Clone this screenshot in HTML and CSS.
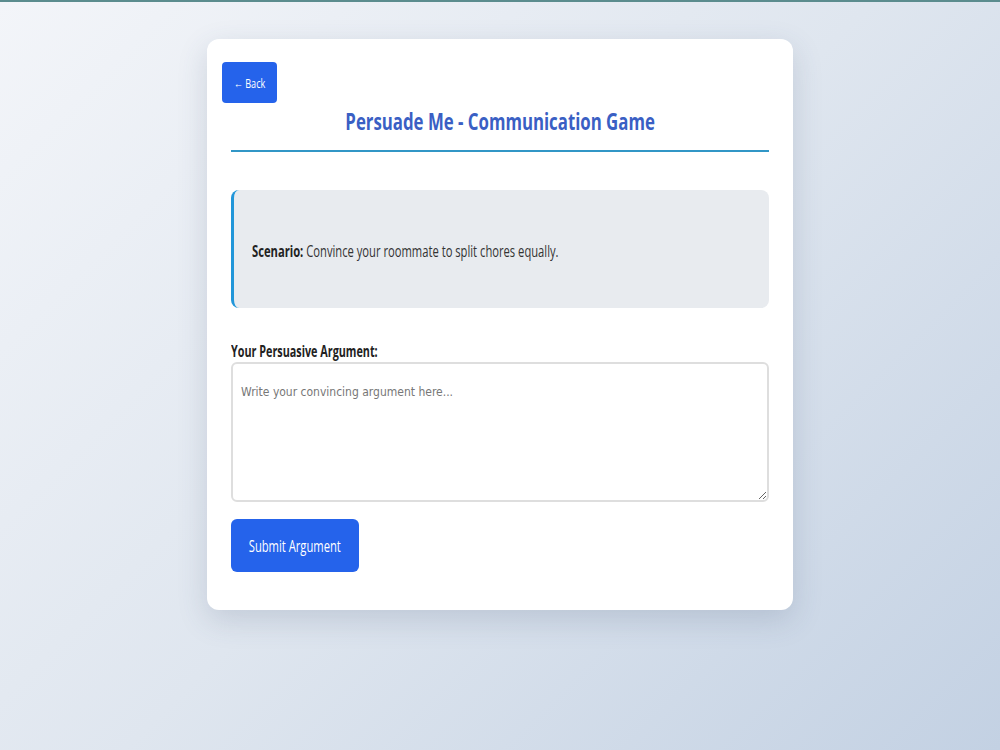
FILE: index.html
```html
<!DOCTYPE html>
<html lang="en">
<head>
<meta charset="utf-8">
<title>Persuade Me - Communication Game</title>
<link rel="stylesheet" href="styles.css">
</head>
<body>
<div class="topline"></div>
<main class="page">
  <section class="card">
    <button class="back"><span class="sq sq-c">← Back</span></button>
    <h1 class="title"><span class="sq sq-c">Persuade Me - Communication Game</span></h1>
    <div class="scenario"><p><span class="sq"><strong>Scenario:</strong> Convince your roommate to split chores equally.</span></p></div>
    <label class="label" for="arg"><span class="sq sq-b">Your Persuasive Argument:</span></label>
    <textarea id="arg" class="input" placeholder="Write your convincing argument here..."></textarea>
    <button class="submit"><span class="sq sq-c">Submit Argument</span></button>
  </section>
</main>
</body>
</html>
```

FILE: styles.css
```css
* { box-sizing: border-box; }
html, body { margin: 0; height: 100%; }
body {
  font-family: "Open Sans", "Noto Sans", sans-serif;
  background: linear-gradient(135deg, #f3f5f9 0%, #dfe6ef 50%, #c3d1e3 100%);
  min-height: 750px;
  color: #222;
}
.sq {
  display: inline-block;
  white-space: nowrap;
  transform: scaleX(0.7);
  transform-origin: left center;
}
.sq-c { transform-origin: center center; }
.sq-b { transform: scaleX(0.675); }
.topline { height: 2px; background: #5b8c8e; }
.page { display: flex; justify-content: center; padding-top: 37px; }
.card {
  position: relative;
  width: 586px;
  background: #fff;
  border-radius: 12px;
  box-shadow: 0 10px 30px rgba(60, 80, 110, 0.18);
  padding: 64px 24px 38px;
  display: flex;
  flex-direction: column;
}
.back {
  position: absolute;
  left: 15px;
  top: 23px;
  width: 55px;
  height: 41px;
  border: none;
  border-radius: 4px;
  background: #2563eb;
  color: #fff;
  font-family: inherit;
  font-size: 13px;
  padding: 0;
  display: flex;
  justify-content: center;
  align-items: center;
}
.title {
  margin: 0;
  text-align: center;
  color: #3a5fc4;
  font-size: 24px;
  font-weight: bold;
  line-height: 36px;
  padding-bottom: 11px;
  border-bottom: 2px solid #3196c6;
}
.scenario {
  margin-top: 38px;
  background: #e8ebef;
  border-left: 3px solid #2196d9;
  border-radius: 8px;
  height: 118px;
  display: flex;
  align-items: center;
  padding: 4px 18px 0;
}
.scenario p { margin: 0; font-size: 16px; color: #333; }
.scenario strong { color: #222; }
.label {
  margin-top: 32px;
  font-weight: bold;
  font-size: 16px;
  color: #222;
  line-height: 22px;
}
.input {
  margin-top: 0;
  height: 140px;
  border: 2px solid #dedede;
  border-radius: 6px;
  padding: 21px 8px;
  font-family: "DejaVu Sans Condensed", "Liberation Sans", sans-serif;
  font-size: 12px;
  resize: vertical;
}
.input::placeholder { color: #777; }
.submit {
  margin-top: 17px;
  align-self: flex-start;
  width: 128px;
  height: 53px;
  border: none;
  border-radius: 6px;
  background: #2563eb;
  color: #fff;
  font-family: inherit;
  font-size: 16px;
  padding: 0;
  display: flex;
  justify-content: center;
  align-items: center;
}
```
